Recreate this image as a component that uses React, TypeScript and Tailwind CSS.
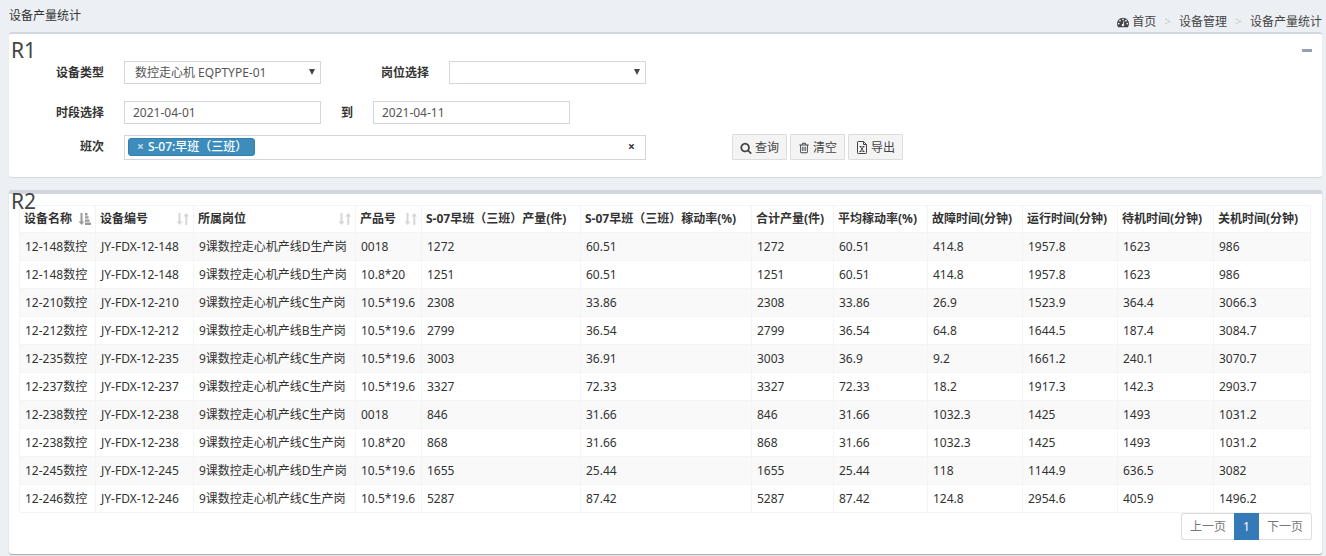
import React from 'react';

const COLUMNS = [
    { title: '设备名称', width: 76, sort: 'asc' },
    { title: '设备编号', width: 98, sort: 'none' },
    { title: '所属岗位', width: 162, sort: 'none' },
    { title: '产品号', width: 66, sort: 'none' },
    { title: 'S-07早班（三班）产量(件)', width: 159 },
    { title: 'S-07早班（三班）稼动率(%)', width: 171 },
    { title: '合计产量(件)', width: 82 },
    { title: '平均稼动率(%)', width: 94 },
    { title: '故障时间(分钟)', width: 95 },
    { title: '运行时间(分钟)', width: 95 },
    { title: '待机时间(分钟)', width: 96 },
    { title: '关机时间(分钟)', width: 97 }
];

const TOTAL_WIDTH = COLUMNS.reduce((sum, c) => sum + c.width, 0);

const ROWS = [
    ['12-148数控', 'JY-FDX-12-148', '9课数控走心机产线D生产岗', '0018', '1272', '60.51', '1272', '60.51', '414.8', '1957.8', '1623', '986'],
    ['12-148数控', 'JY-FDX-12-148', '9课数控走心机产线D生产岗', '10.8*20', '1251', '60.51', '1251', '60.51', '414.8', '1957.8', '1623', '986'],
    ['12-210数控', 'JY-FDX-12-210', '9课数控走心机产线C生产岗', '10.5*19.6', '2308', '33.86', '2308', '33.86', '26.9', '1523.9', '364.4', '3066.3'],
    ['12-212数控', 'JY-FDX-12-212', '9课数控走心机产线B生产岗', '10.5*19.6', '2799', '36.54', '2799', '36.54', '64.8', '1644.5', '187.4', '3084.7'],
    ['12-235数控', 'JY-FDX-12-235', '9课数控走心机产线C生产岗', '10.5*19.6', '3003', '36.91', '3003', '36.9', '9.2', '1661.2', '240.1', '3070.7'],
    ['12-237数控', 'JY-FDX-12-237', '9课数控走心机产线C生产岗', '10.5*19.6', '3327', '72.33', '3327', '72.33', '18.2', '1917.3', '142.3', '2903.7'],
    ['12-238数控', 'JY-FDX-12-238', '9课数控走心机产线C生产岗', '0018', '846', '31.66', '846', '31.66', '1032.3', '1425', '1493', '1031.2'],
    ['12-238数控', 'JY-FDX-12-238', '9课数控走心机产线C生产岗', '10.8*20', '868', '31.66', '868', '31.66', '1032.3', '1425', '1493', '1031.2'],
    ['12-245数控', 'JY-FDX-12-245', '9课数控走心机产线D生产岗', '10.5*19.6', '1655', '25.44', '1655', '25.44', '118', '1144.9', '636.5', '3082'],
    ['12-246数控', 'JY-FDX-12-246', '9课数控走心机产线C生产岗', '10.5*19.6', '5287', '87.42', '5287', '87.42', '124.8', '2954.6', '405.9', '1496.2']
];

const DASHBOARD_PATH = 'M384 1152q0-53-37.5-90.5t-90.5-37.5-90.5 37.5-37.5 90.5 37.5 90.5 90.5 37.5 90.5-37.5 37.5-90.5zm192-448q0-53-37.5-90.5t-90.5-37.5-90.5 37.5-37.5 90.5 37.5 90.5 90.5 37.5 90.5-37.5 37.5-90.5zm428 481l101-382q6-26-7.5-48.5t-38.5-29.5-48 6.5-30 39.5l-101 382q-60 5-107 43.5t-63 98.5q-20 77 20 146t117 89 146-20 89-117q16-60-6-117t-72-91zm660-33q0-53-37.5-90.5t-90.5-37.5-90.5 37.5-37.5 90.5 37.5 90.5 90.5 37.5 90.5-37.5 37.5-90.5zm-640-640q0-53-37.5-90.5t-90.5-37.5-90.5 37.5-37.5 90.5 37.5 90.5 90.5 37.5 90.5-37.5 37.5-90.5zm448 192q0-53-37.5-90.5t-90.5-37.5-90.5 37.5-37.5 90.5 37.5 90.5 90.5 37.5 90.5-37.5 37.5-90.5zm320 448q0 261-141 483-19 29-54 29h-1402q-35 0-54-29-141-221-141-483 0-182 71-348t191-286 286-191 348-71 348 71 286 191 191 286 71 348z';
const SEARCH_PATH = 'M1216 832q0-185-131.5-316.5t-316.5-131.5-316.5 131.5-131.5 316.5 131.5 316.5 316.5 131.5 316.5-131.5 131.5-316.5zm512 832q0 52-38 90t-90 38q-54 0-90-38l-343-342q-179 124-399 124-143 0-273.5-55.5t-225-150-150-225-55.5-273.5 55.5-273.5 150-225 225-150 273.5-55.5 273.5 55.5 225 150 150 225 55.5 273.5q0 220-124 399l343 343q37 37 37 90z';
const TRASH_PATH = 'M704 736v576q0 14-9 23t-23 9h-64q-14 0-23-9t-9-23v-576q0-14 9-23t23-9h64q14 0 23 9t9 23zm256 0v576q0 14-9 23t-23 9h-64q-14 0-23-9t-9-23v-576q0-14 9-23t23-9h64q14 0 23 9t9 23zm256 0v576q0 14-9 23t-23 9h-64q-14 0-23-9t-9-23v-576q0-14 9-23t23-9h64q14 0 23 9t9 23zm128 724v-948h-896v948q0 22 7 40.5t14.5 27 10.5 8.5h832q3 0 10.5-8.5t14.5-27 7-40.5zm-672-1076h448l-48-117q-7-9-17-11h-317q-10 2-17 11zm928 32v64q0 14-9 23t-23 9h-96v948q0 83-47 143.5t-113 60.5h-832q-66 0-113-58.5t-47-141.5v-952h-96q-14 0-23-9t-9-23v-64q0-14 9-23t23-9h309l70-167q15-37 54-63t79-26h320q40 0 79 26t54 63l70 167h309q14 0 23 9t9 23z';

const GlyphIcon: React.FC<{ path: string; className?: string }> = ({ path, className }) => (
    <svg viewBox="0 0 1792 1792" fill="currentColor" className={className} aria-hidden="true">
        <path d={path} />
    </svg>
);

const ExcelIcon = () => (
    <svg viewBox="0 0 12 13" fill="none" stroke="currentColor" className="h-[13px] w-3" aria-hidden="true">
        <path d="M1.5 1.2q0-.7.7-.7H7.5l3 3v8.3q0 .7-.7.7H2.2q-.7 0-.7-.7zM7.5.5v3h3" />
        <path d="M3.5 5.5h2M6.5 5.5h2M3.5 10.5h2M6.5 10.5h2M4.3 5.5l3.4 5M7.7 5.5l-3.4 5" />
    </svg>
);

// 未排序：上下箭头；升序：箭头加阶梯条
const SortIcon: React.FC<{ sort: string }> = ({ sort }) => (
    <svg
        viewBox="0 0 12 12"
        fill="currentColor"
        className={`h-3 w-3 shrink-0 ${sort === 'asc' ? 'text-[#999999]' : 'text-[#d6d6d6]'}`}
        aria-hidden="true"
    >
        <path d="M1.5 0h2v8.5H5.5L2.5 12-.5 8.5h2z" />
        {sort === 'asc'
            ? <path d="M6 0h2.5v2.4H6zM6 3.2h3.5v2.4H6zM6 6.4h4.5v2.4H6zM6 9.6h6V12H6z" />
            : <path d="M8.3 12h2V3.5h2L9.3 0l-3 3.5h2z" />}
    </svg>
);

interface SelectBoxProps {
    id: string;
    options: string[];
}

const SelectBox: React.FC<SelectBoxProps> = ({ id, options }) => (
    <div className="relative ml-5 w-[15%]">
        <select
            id={id}
            className="block h-[23px] w-full appearance-none border border-[#d2d6de] bg-white pl-[10px] pr-5 pt-px text-[#555555]"
        >
            {options.map(option => <option key={option}>{option}</option>)}
        </select>
        <svg viewBox="0 0 6 6" fill="#444444" className="pointer-events-none absolute right-[6px] top-2 h-[6px] w-[6px]" aria-hidden="true">
            <path d="M0 0h6L3 6z" />
        </svg>
    </div>
);

interface ToolButtonProps {
    label: string;
    children: React.ReactNode;
}

const ToolButton: React.FC<ToolButtonProps> = ({ label, children }) => (
    <button
        type="button"
        className="flex h-[26px] items-center gap-[3px] rounded-[1px] border border-[#dddddd] bg-[#f4f4f4] px-[7px] pt-px text-[#444444]"
    >
        {children}
        {label}
    </button>
);

const FilterPanel = () => (
    <section className="relative rounded-[3px] border-t-2 border-[#d2d6de] bg-white pb-[17px] pt-[27px] shadow-[0_1px_1px_rgba(0,0,0,0.1)]">
        <h2 className="absolute left-[2px] top-1 text-[21px] leading-6 text-[#444444]">R1</h2>
        <button type="button" aria-label="折叠" className="absolute right-[10px] top-2 flex h-4 w-[10px] items-center">
            <span className="h-[3px] w-full bg-[#97a0b3]" />
        </button>

        <div className="flex items-center">
            <label htmlFor="eqpType" className="w-[95px] text-right font-bold">设备类型</label>
            <SelectBox id="eqpType" options={['数控走心机 EQPTYPE-01']} />
            <label htmlFor="post" className="w-[108px] text-right font-bold">岗位选择</label>
            <SelectBox id="post" options={['']} />
        </div>

        <div className="mt-[17px] flex items-center">
            <label htmlFor="startDate" className="w-[95px] text-right font-bold">时段选择</label>
            <input
                id="startDate"
                defaultValue="2021-04-01"
                className="ml-5 h-[23px] w-[15%] border border-[#d2d6de] px-2 text-[#555555]"
            />
            <label htmlFor="endDate" className="w-8 text-right font-bold">到</label>
            <input
                id="endDate"
                defaultValue="2021-04-11"
                className="ml-5 h-[23px] w-[15%] border border-[#d2d6de] px-2 text-[#555555]"
            />
        </div>

        <div className="mt-[10px] flex items-center">
            <label htmlFor="shift" className="w-[95px] text-right font-bold">班次</label>
            <div className="ml-5 flex h-[25px] w-[calc(30%+128px)] items-center border border-[#d2d6de] pl-[3px] pr-[10px]">
                <span className="flex h-[18px] shrink-0 items-center gap-1 rounded-[3px] border border-[#367fa9] bg-[#3c8dbc] pl-2 pr-[7px] font-medium text-white">
                    <button type="button" aria-label="移除" className="font-bold text-white/70">×</button>
                    S-07:早班（三班）
                </span>
                <input id="shift" className="min-w-0 flex-1 outline-none" />
                <button type="button" aria-label="清除" className="font-bold">×</button>
            </div>
            <div className="ml-[86px] flex gap-[3px]">
                <ToolButton label="查询"><GlyphIcon path={SEARCH_PATH} className="h-3 w-3" /></ToolButton>
                <ToolButton label="清空"><GlyphIcon path={TRASH_PATH} className="h-3 w-3" /></ToolButton>
                <ToolButton label="导出"><ExcelIcon /></ToolButton>
            </div>
        </div>
    </section>
);

const ResultPanel = () => (
    <section className="relative mt-[13px] rounded-[3px] border-t-4 border-[#d2d6de] bg-white pb-[14px] pl-[10px] pr-[10px] pt-[11px] shadow-[0_1px_1px_rgba(0,0,0,0.3)]">
        <h2 className="absolute left-[2px] top-[-5px] text-[21px] leading-6 text-[#444444]">R2</h2>
        <div className="pr-px">
            <table className="w-full table-fixed border-collapse whitespace-nowrap">
                <colgroup>
                    {COLUMNS.map(column => (
                        <col key={column.title} style={{ width: `${(column.width / TOTAL_WIDTH) * 100}%` }} />
                    ))}
                </colgroup>
                <thead>
                    <tr className="h-[27px]">
                        {COLUMNS.map(column => (
                            <th key={column.title} className="border border-[#f4f4f4] px-1 text-left font-bold">
                                <div className="flex items-center justify-between">
                                    {column.title}
                                    {column.sort && <SortIcon sort={column.sort} />}
                                </div>
                            </th>
                        ))}
                    </tr>
                </thead>
                <tbody>
                    {ROWS.map((row, index) => (
                        <tr key={index} className="h-7 odd:bg-[#f9f9f9]">
                            {row.map((cell, i) => (
                                <td key={i} className="border border-[#f4f4f4] px-[5px]">{cell}</td>
                            ))}
                        </tr>
                    ))}
                </tbody>
            </table>
        </div>

        <nav className="flex justify-end" aria-label="分页">
            <a href="#prev" className="flex h-[27px] items-center rounded-l-[3px] border border-r-0 border-[#dddddd] px-2 text-[#777777]">上一页</a>
            <a href="#1" className="flex h-[27px] items-center bg-[#337ab7] px-[9px] text-white">1</a>
            <a href="#next" className="flex h-[27px] items-center rounded-r-[3px] border border-l-0 border-[#dddddd] px-2 text-[#777777]">下一页</a>
        </nav>
    </section>
);

const App = () => (
    <div className="min-h-screen bg-[#ecf0f5] pl-[9px] pr-1 font-['Noto_Sans','Noto_Sans_CJK_SC',sans-serif] text-[12px] leading-4 text-[#333333]">
        <header className="flex h-8 items-start justify-between">
            <h1 className="pt-2">设备产量统计</h1>
            <nav className="flex items-center pt-[14px] text-[#444444]" aria-label="面包屑">
                <a href="#home" className="flex items-center gap-[3px]">
                    <GlyphIcon path={DASHBOARD_PATH} className="h-3 w-3" />
                    首页
                </a>
                <span className="px-2 text-[#cccccc]">&gt;</span>
                <a href="#device">设备管理</a>
                <span className="px-2 text-[#cccccc]">&gt;</span>
                <span>设备产量统计</span>
            </nav>
        </header>
        <main>
            <FilterPanel />
            <ResultPanel />
        </main>
    </div>
);

export default App;
